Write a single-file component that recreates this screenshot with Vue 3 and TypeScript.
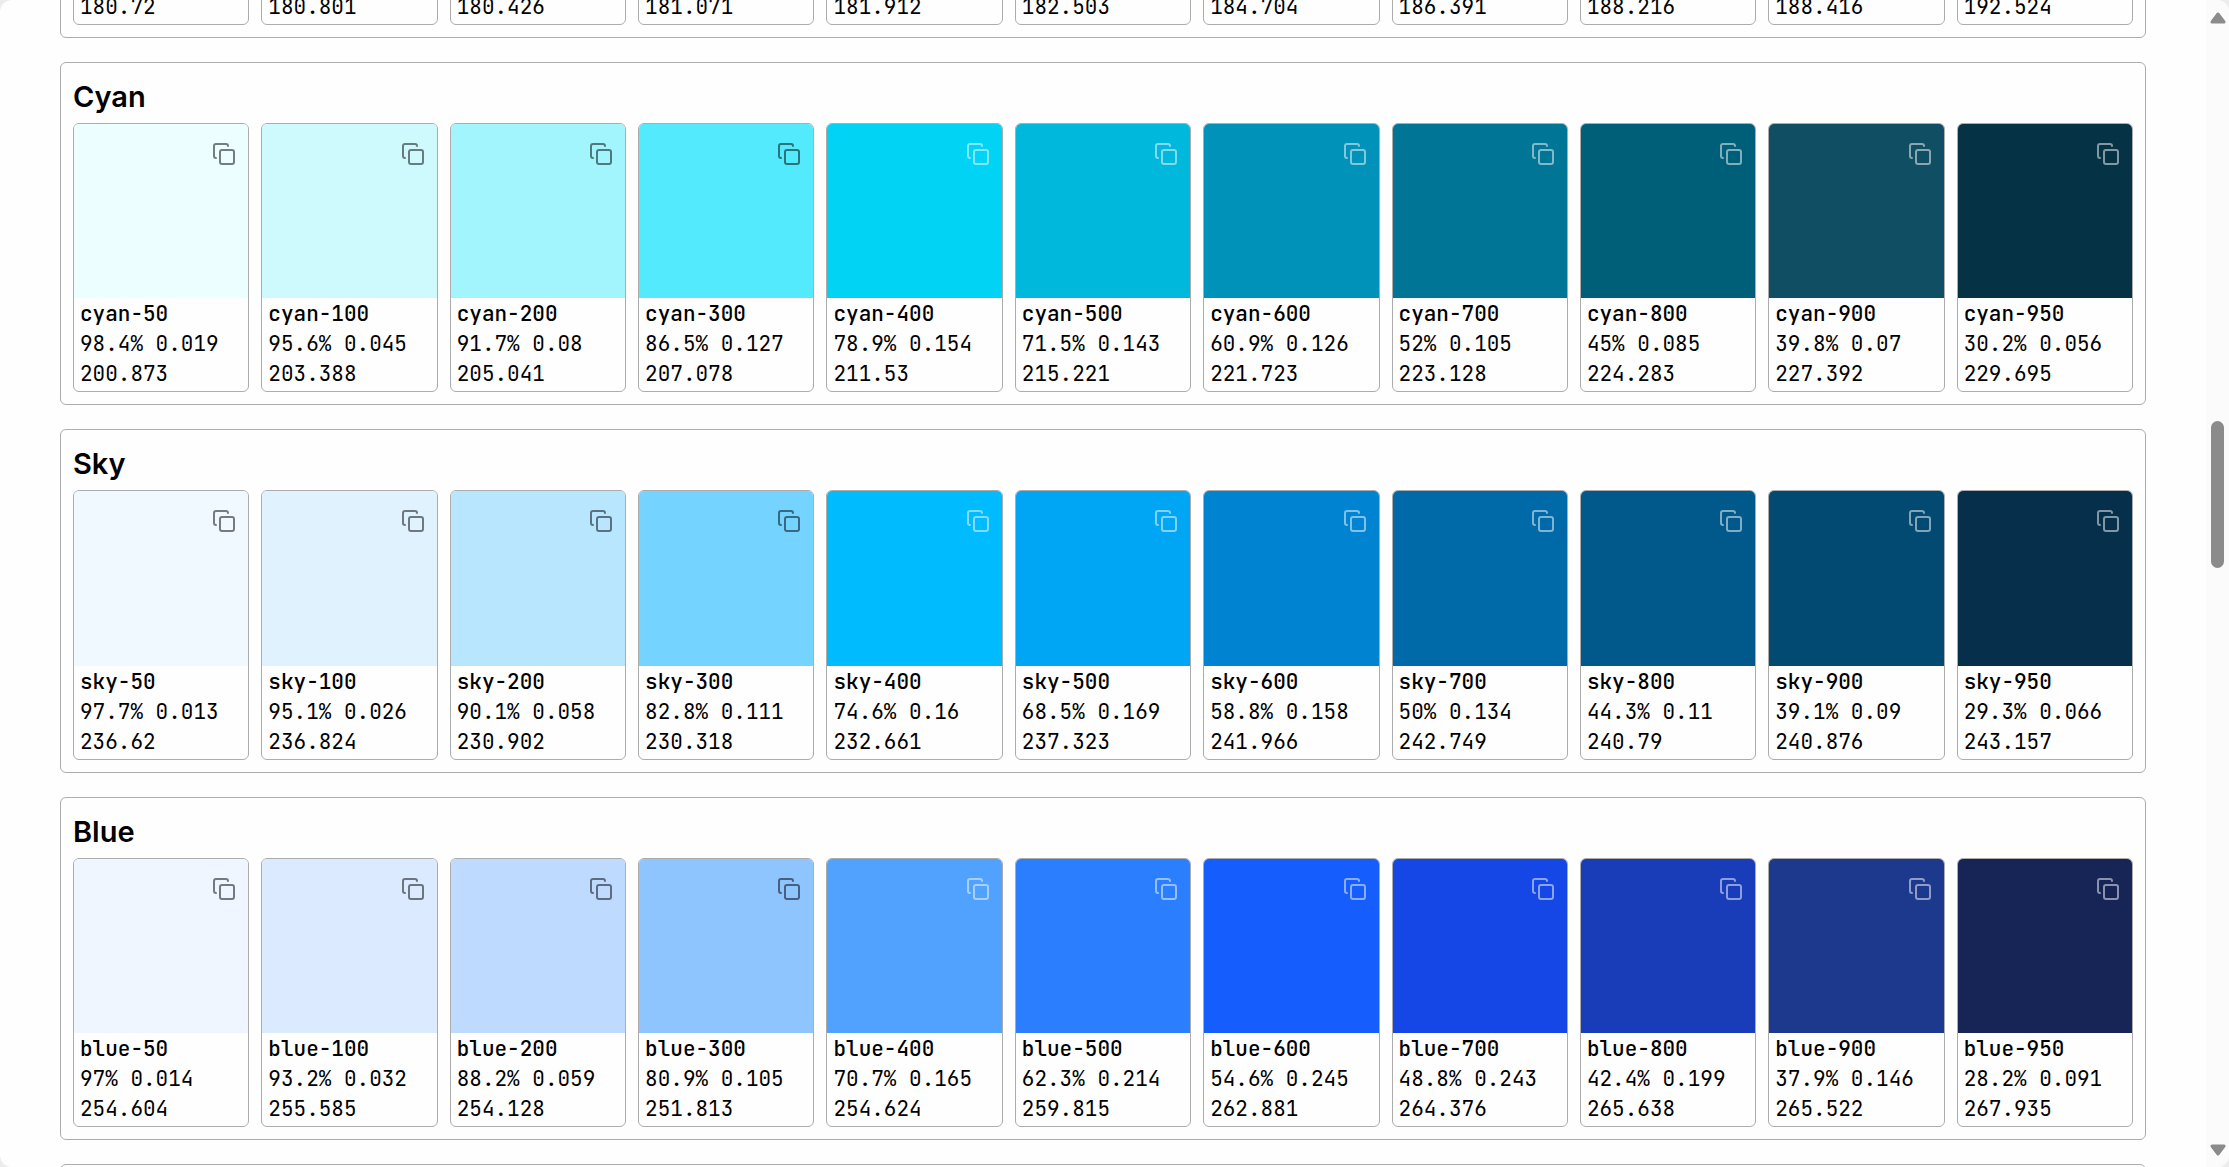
<script setup lang="ts">
interface Shade {
  step: string
  lightness: string
  chroma: string
  hue: string
}

interface Palette {
  title: string
  key: string
  shades: Shade[]
}

const steps = ['50', '100', '200', '300', '400', '500', '600', '700', '800', '900', '950']

function palette(title: string, values: string): Palette {
  const shades = values.split(',').map((value, i) => {
    const [lightness, chroma, hue] = value.trim().split(' ')
    return { step: steps[i], lightness, chroma, hue }
  })
  return { title, key: title.toLowerCase(), shades }
}

const previousHues = [
  '180.72', '180.801', '180.426', '181.071', '181.912', '182.503',
  '184.704', '186.391', '188.216', '188.416', '192.524',
]

const palettes: Palette[] = [
  palette('Cyan', '98.4% 0.019 200.873, 95.6% 0.045 203.388, 91.7% 0.08 205.041, 86.5% 0.127 207.078, 78.9% 0.154 211.53, 71.5% 0.143 215.221, 60.9% 0.126 221.723, 52% 0.105 223.128, 45% 0.085 224.283, 39.8% 0.07 227.392, 30.2% 0.056 229.695'),
  palette('Sky', '97.7% 0.013 236.62, 95.1% 0.026 236.824, 90.1% 0.058 230.902, 82.8% 0.111 230.318, 74.6% 0.16 232.661, 68.5% 0.169 237.323, 58.8% 0.158 241.966, 50% 0.134 242.749, 44.3% 0.11 240.79, 39.1% 0.09 240.876, 29.3% 0.066 243.157'),
  palette('Blue', '97% 0.014 254.604, 93.2% 0.032 255.585, 88.2% 0.059 254.128, 80.9% 0.105 251.813, 70.7% 0.165 254.624, 62.3% 0.214 259.815, 54.6% 0.245 262.881, 48.8% 0.243 264.376, 42.4% 0.199 265.638, 37.9% 0.146 265.522, 28.2% 0.091 267.935'),
]

function color(shade: Shade): string {
  return `oklch(${shade.lightness} ${shade.chroma} ${shade.hue})`
}

function copy(shade: Shade): void {
  navigator.clipboard?.writeText(color(shade))
}
</script>

<template>
  <div class="window">
    <main class="content">
      <div class="peek-top">
        <section class="group">
          <div class="row">
            <article v-for="hue in previousHues" :key="hue" class="card">
              <div class="info"><p>{{ hue }}</p></div>
            </article>
          </div>
        </section>
      </div>

      <section v-for="p in palettes" :key="p.key" class="group">
        <h2>{{ p.title }}</h2>
        <div class="row">
          <article v-for="s in p.shades" :key="s.step" class="card">
            <div class="swatch" :style="{ backgroundColor: color(s) }">
              <button
                type="button"
                class="copy"
                :class="{ light: Number(s.step) >= 400 }"
                :aria-label="`Copy ${p.key}-${s.step}`"
                @click="copy(s)"
              >
                <svg viewBox="0 0 24 24" width="24" height="24" fill="none" stroke="currentColor" stroke-linecap="round" stroke-linejoin="round">
                  <rect x="8" y="8" width="14" height="14" rx="2" />
                  <path d="M4 16c-1.1 0-2-.9-2-2V4c0-1.1.9-2 2-2h10c1.1 0 2 .9 2 2" />
                </svg>
              </button>
            </div>
            <div class="info">
              <h3>{{ p.key }}-{{ s.step }}</h3>
              <p>{{ s.lightness }} {{ s.chroma }}</p>
              <p>{{ s.hue }}</p>
            </div>
          </article>
        </div>
      </section>

      <section class="group peek-bottom"></section>
    </main>

    <div class="scrollbar" aria-hidden="true">
      <svg class="arrow" viewBox="0 0 16 12" width="16" height="12">
        <path d="M8 2 L14 10 H2 Z" />
      </svg>
      <div class="track">
        <span class="before"></span>
        <span class="thumb"></span>
        <span class="after"></span>
      </div>
      <svg class="arrow" viewBox="0 0 16 12" width="16" height="12">
        <path d="M8 10 L14 2 H2 Z" />
      </svg>
    </div>
  </div>
</template>

<style>
body {
  margin: 0;
  background: #ececec;
}
</style>

<style scoped>
.window {
  display: flex;
  height: 100vh;
  overflow: hidden;
  border-radius: 12px;
  background: #fefefe;
  color: #000;
  font-family: Inter, "Liberation Sans", sans-serif;
}

.content {
  flex: 1;
  min-width: 0;
  display: flex;
  flex-direction: column;
  gap: 24px;
  padding: 0 60px;
}

.peek-top {
  flex: none;
  display: flex;
  align-items: flex-end;
  height: 38px;
  overflow: hidden;
}

.group {
  flex: none;
  box-sizing: border-box;
  width: 100%;
  padding: 12px;
  border: 1px solid #acacac;
  border-radius: 6px;
}

.peek-bottom {
  height: 60px;
}

h2 {
  margin: 0 0 4px;
  font-size: 29px;
  line-height: 44px;
  font-weight: 600;
}

.row {
  display: grid;
  grid-template-columns: repeat(11, minmax(0, 1fr));
  gap: 12px;
}

.card {
  border: 1px solid #acacac;
  border-radius: 6px;
  overflow: hidden;
}

.swatch {
  display: flex;
  justify-content: flex-end;
  align-items: flex-start;
  box-sizing: border-box;
  aspect-ratio: 1;
  padding: 18px 12px;
}

.copy {
  display: block;
  padding: 0;
  border: 0;
  background: none;
  color: #000;
  opacity: 0.5;
  cursor: pointer;
}

.copy svg {
  display: block;
  stroke-width: 2;
}

.copy.light {
  color: #fff;
}

.info {
  padding: 1px 6px 2px;
  font-family: "JetBrains Mono", "DejaVu Sans Mono", monospace;
  font-size: 21px;
  line-height: 30px;
  white-space: nowrap;
}

h3,
p {
  margin: 0;
  font-size: inherit;
}

h3 {
  font-weight: 500;
}

.scrollbar {
  flex: none;
  display: flex;
  flex-direction: column;
  align-items: center;
  box-sizing: border-box;
  width: 23px;
  padding: 12px 0 11px;
  background: #fbfbfb;
}

.arrow {
  fill: #8b8b8b;
  stroke: #8b8b8b;
  stroke-width: 3;
  stroke-linejoin: round;
}

.track {
  flex: 1;
  display: flex;
  flex-direction: column;
}

.before {
  flex: 397;
}

.thumb {
  flex: 147;
  width: 13px;
  border-radius: 7px;
  background: #8b8b8b;
}

.after {
  flex: 576;
}
</style>
